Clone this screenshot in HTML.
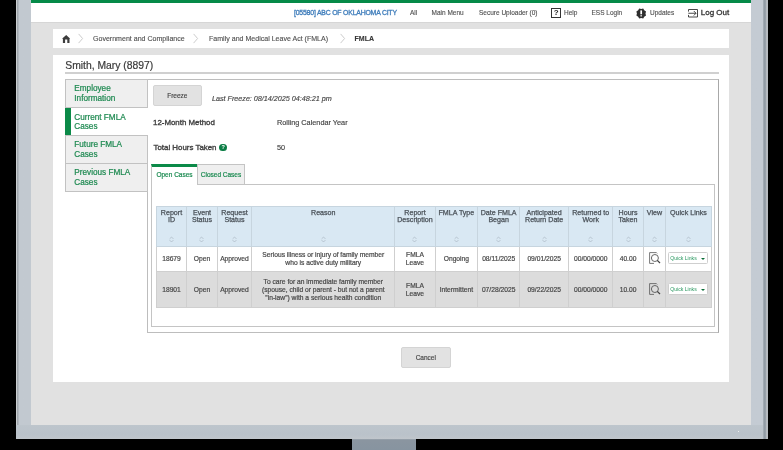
<!DOCTYPE html>
<html><head><meta charset="utf-8">
<style>
*{margin:0;padding:0;box-sizing:border-box}
html,body{width:783px;height:450px;overflow:hidden;background:#000;-webkit-font-smoothing:antialiased;will-change:transform;font-family:"Liberation Sans",sans-serif}
.a{position:absolute}
#bezel{left:16px;top:-20px;width:752px;height:459px;background:linear-gradient(to right,#c9cdcf 0,#c9cdcf 0.8px,#9aa1a8 1px,#a8aeb4 2px,#c2c9d0 3.5px,#c4cbd3 100%)}
#bezelB{left:16px;top:425px;width:746.5px;height:14px;background:linear-gradient(to bottom,#bdc5cc 0,#bac2ca 70%,#c0c6cc 100%)}
#bezelEdge{left:762.5px;top:-20px;width:5.5px;height:459px;background:linear-gradient(to right,#a9b2ba 0,#929ca5 1.5px,#9aa3ab 2.8px,#b6bbc0 3.5px,#b9bdc2 100%)}
#screen{left:30.5px;top:-10px;width:720.5px;height:435px;background:#e1e1e1}
#gbar{left:30.5px;top:0;width:720.5px;height:3px;background:#058a48}
#hdr{left:30.5px;top:2.7px;width:720.5px;height:20.6px;background:#fff;border-bottom:0.6px solid #d6d6d6}
.ht{font-size:6.5px;color:#505050;-webkit-text-stroke:0.12px #505050;top:9.2px;white-space:nowrap;line-height:8px}
#bc{left:53px;top:29.2px;width:675.5px;height:18.6px;background:#fff}
.bt{font-size:7.06px;color:#505050;-webkit-text-stroke:0.12px #505050;top:34.7px;white-space:nowrap;line-height:8px}
#content{left:53px;top:55px;width:676px;height:327px;background:#fff}
#name{left:65.3px;top:59px;font-size:10.35px;color:#3a3a3a;-webkit-text-stroke:0.2px #3a3a3a;white-space:nowrap;line-height:14px}
#uline{left:65px;top:72px;width:654px;height:1.5px;background:#d0d0d0}
#panel{left:147px;top:79px;width:572px;height:253.8px;border:1px solid #bdbdbd;border-right-color:#a8a8a8}
.ni{width:83px;border:1px solid #c2c2c2;background:#efefef;color:#1f8a52;font-size:8.2px;line-height:9.5px;padding:4.3px 0 0 8.3px;-webkit-text-stroke:0.22px #1f8a52;white-space:nowrap}
.ni.cur{background:#fff;border:none;border-left:6px solid #0b8a48;padding:4.8px 0 0 3.3px;width:83px}
#btnF{left:153px;top:85px;width:48.7px;height:21px;background:#e2e2e2;border:1px solid #d4d4d4;border-radius:2px;font-size:6.5px;color:#444;-webkit-text-stroke:0.15px #444;text-align:center;line-height:19px}
#lastF{left:212px;top:95.2px;font-size:7.18px;font-style:italic;color:#444;-webkit-text-stroke:0.15px #444;white-space:nowrap}
.lbl{font-size:7.9px;color:#3f3f3f;-webkit-text-stroke:0.35px #3f3f3f;white-space:nowrap}
.val{font-size:7.3px;color:#444;-webkit-text-stroke:0.15px #444;white-space:nowrap}
#tabs{left:151px;top:164px}
#tabpanel{left:151px;top:183.8px;width:564px;height:143.6px;border:1px solid #c4c4c4}
#tOpen{left:151px;top:164px;width:46px;height:20.8px;background:#fff;border-top:3px solid #0b8a48;border-left:1px solid #c4c4c4;font-size:6.5px;color:#1a8a50;-webkit-text-stroke:0.2px #1a8a50;text-align:center;line-height:16px}
#tClosed{left:197px;top:164px;width:48px;height:20.3px;background:#efefef;border:1px solid #c4c4c4;border-bottom:none;font-size:6.5px;color:#1a8a50;-webkit-text-stroke:0.2px #1a8a50;text-align:center;line-height:20px}
table{position:absolute;left:155.6px;top:206.4px;border-collapse:collapse;table-layout:fixed;font-size:6.7px;color:#484848;-webkit-text-stroke:0.2px #484848}
td,th{border:1px solid #cfcfcf;text-align:center;vertical-align:middle;padding:0;line-height:8px}
th{background:#d9e8f3;color:#4a5158;font-weight:normal;-webkit-text-stroke:0.25px #4a5158;vertical-align:top;padding-top:2.2px;height:39.6px;line-height:7.6px;border-color:#c7d5df;position:relative;font-size:7.1px}
tr.r1 td{height:25px;background:#fff}
tr.r2 td{height:36.3px;background:#dcdcdc}
.sort{position:absolute;left:50%;top:29px;width:5px;height:7px;margin-left:-2.5px}
.ql{display:inline-block;-webkit-text-stroke:0;width:40px;height:12px;border:1px solid #cfcfcf;border-radius:1.5px;background:#fff;color:#2a9860;font-size:5.15px;line-height:10px;text-align:left;padding-left:1.5px;position:relative;vertical-align:middle;margin-left:-1.5px;margin-top:-1px}
.ql:after{content:"";position:absolute;right:2px;top:4.5px;border-left:2.2px solid transparent;border-right:2.2px solid transparent;border-top:2.6px solid #0b6e38}
#cancel{left:401px;top:347px;width:49.5px;height:20.5px;background:#e2e2e2;border:1px solid #d4d4d4;border-radius:2px;font-size:6.5px;color:#444;-webkit-text-stroke:0.15px #444;text-align:center;line-height:19px}
#stand{left:352.3px;top:439px;width:63.7px;height:11px;background:linear-gradient(#9aa4ad,#8a95a0 1.5px,#8794a0)}
</style></head><body>
<div id="bezel" class="a"></div>
<div id="bezelB" class="a"></div>
<div id="bezelEdge" class="a"></div>
<div id="screen" class="a"></div>
<div id="gbar" class="a"></div>
<div id="hdr" class="a"></div>
<div class="a ht" style="left:294px;top:9.2px;color:#3f7dbb;-webkit-text-stroke:0.3px #3f7dbb;font-size:6.9px;letter-spacing:-0.2px">[05580] ABC OF OKLAHOMA CITY</div>
<div class="a ht" style="left:410px">All</div>
<div class="a ht" style="left:431.5px">Main Menu</div>
<div class="a ht" style="left:479px">Secure Uploader (0)</div>
<div class="a" style="left:550.8px;top:7.8px;width:10.7px;height:10.6px;border:1px solid #333;font-size:8px;font-weight:bold;color:#222;text-align:center;line-height:8.6px">?</div>
<div class="a ht" style="left:564px">Help</div>
<div class="a ht" style="left:591.5px">ESS Login</div>
<svg class="a" style="left:635.8px;top:7.6px" width="11" height="11" viewBox="0 0 11 11"><polygon fill="#2e2e2e" points="7.20,0.42 8.22,2.32 10.03,3.40 9.47,5.50 10.03,7.60 8.22,8.68 7.20,10.58 5.20,10.00 3.20,10.58 2.18,8.68 0.37,7.60 0.93,5.50 0.37,3.40 2.18,2.32 3.20,0.42 5.20,1.00"/><rect x="4.35" y="2.4" width="1.7" height="3.9" fill="#fff"/><rect x="4.35" y="7.3" width="1.7" height="1.1" fill="#fff"/></svg>
<div class="a ht" style="left:650px">Updates</div>
<svg class="a" style="left:688px;top:9px" width="10" height="8.5" viewBox="0 0 10 8.5"><path d="M0.5 2.6V0.5H9.5V8H0.5V5.9" fill="none" stroke="#333" stroke-width="0.9"/><path d="M0.3 4.25H8M5.8 2L8 4.25L5.8 6.5" fill="none" stroke="#333" stroke-width="0.9"/></svg>
<div class="a" style="left:700.8px;top:8.2px;font-size:8px;color:#333;-webkit-text-stroke:0.3px #333;white-space:nowrap;line-height:10px">Log Out</div>

<div id="bc" class="a"></div>
<svg class="a" style="left:61.9px;top:35px" width="8.4" height="8" viewBox="0 0 8.4 8"><path d="M4.2 0L8.4 3.8H7.5V7.9H5.3V4.4H3.1V7.9H0.9V3.8H0Z" fill="#3d3d3d"/></svg>
<svg class="a" style="left:78px;top:33px" width="6" height="11" viewBox="0 0 6 11"><path d="M0.6 0.9L4.6 5.5L0.6 10.1" fill="none" stroke="#c6c6c6" stroke-width="0.9"/></svg>
<div class="a bt" style="left:93px">Government and Compliance</div>
<svg class="a" style="left:193px;top:33px" width="6" height="11" viewBox="0 0 6 11"><path d="M0.6 0.9L4.6 5.5L0.6 10.1" fill="none" stroke="#c6c6c6" stroke-width="0.9"/></svg>
<div class="a bt" style="left:209px">Family and Medical Leave Act (FMLA)</div>
<svg class="a" style="left:340px;top:33px" width="6" height="11" viewBox="0 0 6 11"><path d="M0.6 0.9L4.6 5.5L0.6 10.1" fill="none" stroke="#c6c6c6" stroke-width="0.9"/></svg>
<div class="a bt" style="left:354.5px;font-weight:bold;color:#333">FMLA</div>

<div id="content" class="a"></div>
<div id="name" class="a">Smith, Mary (8897)</div>
<div id="uline" class="a"></div>
<div id="panel" class="a"></div>
<div class="a ni" style="left:65px;top:79px;height:29px">Employee<br>Information</div>
<div class="a ni cur" style="left:65px;top:108px;height:27px">Current FMLA<br>Cases</div>
<div class="a ni" style="left:65px;top:135px;height:29px">Future FMLA<br>Cases</div>
<div class="a ni" style="left:65px;top:163px;height:29px">Previous FMLA<br>Cases</div>
<div id="btnF" class="a">Freeze</div>
<div id="lastF" class="a">Last Freeze: 08/14/2025 04:48:21 pm</div>
<div class="a lbl" style="left:153px;top:117.6px">12-Month Method</div>
<div class="a val" style="left:277px;top:118px">Rolling Calendar Year</div>
<div class="a lbl" style="left:153.5px;top:142.8px">Total Hours Taken</div>
<div class="a" style="left:219.4px;top:143.7px;width:7.7px;height:7.7px;border-radius:50%;background:#0b7d45;color:#fff;font-size:5.5px;font-weight:bold;text-align:center;line-height:7.5px">?</div>
<div class="a val" style="left:277px;top:143.3px">50</div>

<div id="tabpanel" class="a"></div>
<div id="tOpen" class="a">Open Cases</div>
<div id="tClosed" class="a">Closed Cases</div>

<table>
<colgroup><col style="width:30.8px"><col style="width:30.2px"><col style="width:34.8px"><col style="width:142.8px"><col style="width:40.6px"><col style="width:42.25px"><col style="width:42.25px"><col style="width:48.75px"><col style="width:44.45px"><col style="width:30.2px"><col style="width:22.7px"><col style="width:45.2px"></colgroup>
<tr>
<th>Report<br>ID<svg class="sort" viewBox="0 0 5 7"><path d="M0.6 2.9L2.5 1L4.4 2.9M0.6 4.1L2.5 6L4.4 4.1" fill="none" stroke="#aebbc6" stroke-width="0.8"/></svg></th>
<th>Event<br>Status<svg class="sort" viewBox="0 0 5 7"><path d="M0.6 2.9L2.5 1L4.4 2.9M0.6 4.1L2.5 6L4.4 4.1" fill="none" stroke="#aebbc6" stroke-width="0.8"/></svg></th>
<th>Request<br>Status<svg class="sort" viewBox="0 0 5 7"><path d="M0.6 2.9L2.5 1L4.4 2.9M0.6 4.1L2.5 6L4.4 4.1" fill="none" stroke="#aebbc6" stroke-width="0.8"/></svg></th>
<th>Reason<svg class="sort" viewBox="0 0 5 7"><path d="M0.6 2.9L2.5 1L4.4 2.9M0.6 4.1L2.5 6L4.4 4.1" fill="none" stroke="#aebbc6" stroke-width="0.8"/></svg></th>
<th>Report<br>Description<svg class="sort" viewBox="0 0 5 7"><path d="M0.6 2.9L2.5 1L4.4 2.9M0.6 4.1L2.5 6L4.4 4.1" fill="none" stroke="#aebbc6" stroke-width="0.8"/></svg></th>
<th>FMLA Type<svg class="sort" viewBox="0 0 5 7"><path d="M0.6 2.9L2.5 1L4.4 2.9M0.6 4.1L2.5 6L4.4 4.1" fill="none" stroke="#aebbc6" stroke-width="0.8"/></svg></th>
<th>Date FMLA<br>Began<svg class="sort" viewBox="0 0 5 7"><path d="M0.6 2.9L2.5 1L4.4 2.9M0.6 4.1L2.5 6L4.4 4.1" fill="none" stroke="#aebbc6" stroke-width="0.8"/></svg></th>
<th>Anticipated<br>Return Date<svg class="sort" viewBox="0 0 5 7"><path d="M0.6 2.9L2.5 1L4.4 2.9M0.6 4.1L2.5 6L4.4 4.1" fill="none" stroke="#aebbc6" stroke-width="0.8"/></svg></th>
<th>Returned to<br>Work<svg class="sort" viewBox="0 0 5 7"><path d="M0.6 2.9L2.5 1L4.4 2.9M0.6 4.1L2.5 6L4.4 4.1" fill="none" stroke="#aebbc6" stroke-width="0.8"/></svg></th>
<th>Hours<br>Taken<svg class="sort" viewBox="0 0 5 7"><path d="M0.6 2.9L2.5 1L4.4 2.9M0.6 4.1L2.5 6L4.4 4.1" fill="none" stroke="#aebbc6" stroke-width="0.8"/></svg></th>
<th>View<svg class="sort" viewBox="0 0 5 7"><path d="M0.6 2.9L2.5 1L4.4 2.9M0.6 4.1L2.5 6L4.4 4.1" fill="none" stroke="#aebbc6" stroke-width="0.8"/></svg></th>
<th>Quick Links<svg class="sort" viewBox="0 0 5 7"><path d="M0.6 2.9L2.5 1L4.4 2.9M0.6 4.1L2.5 6L4.4 4.1" fill="none" stroke="#aebbc6" stroke-width="0.8"/></svg></th>
</tr>
<tr class="r1">
<td>18679</td><td>Open</td><td>Approved</td><td>Serious illness or injury of family member<br>who is active duty military</td><td>FMLA<br>Leave</td><td>Ongoing</td><td>08/11/2025</td><td>09/01/2025</td><td>00/00/0000</td><td>40.00</td>
<td><svg width="12" height="12" viewBox="0 0 12 12" style="vertical-align:middle;margin-left:1.2px;margin-top:-1px"><path d="M5 11.4H0.6V0.6H7.4L8.2 1.4" fill="none" stroke="#555" stroke-width="0.8"/><circle cx="5.9" cy="6" r="3.5" fill="none" stroke="#555" stroke-width="0.9"/><path d="M8.3 8.4L11 11" stroke="#444" stroke-width="1.3"/></svg></td>
<td><span class="ql">Quick Links</span></td></tr>
<tr class="r2">
<td>18901</td><td>Open</td><td>Approved</td><td>To care for an immediate family member<br>(spouse, child or parent - but not a parent<br>"in-law") with a serious health condition</td><td>FMLA<br>Leave</td><td>Intermittent</td><td>07/28/2025</td><td>09/22/2025</td><td>00/00/0000</td><td>10.00</td>
<td><svg width="12" height="12" viewBox="0 0 12 12" style="vertical-align:middle;margin-left:1.2px;margin-top:-1px"><path d="M5 11.4H0.6V0.6H7.4L8.2 1.4" fill="none" stroke="#555" stroke-width="0.8"/><circle cx="5.9" cy="6" r="3.5" fill="none" stroke="#555" stroke-width="0.9"/><path d="M8.3 8.4L11 11" stroke="#444" stroke-width="1.3"/></svg></td>
<td><span class="ql">Quick Links</span></td></tr>
</table>

<div id="cancel" class="a">Cancel</div>
<div id="stand" class="a"></div>
<div class="a" style="left:737.5px;top:430.5px;width:1px;height:1px;background:#eee"></div>
</body></html>
